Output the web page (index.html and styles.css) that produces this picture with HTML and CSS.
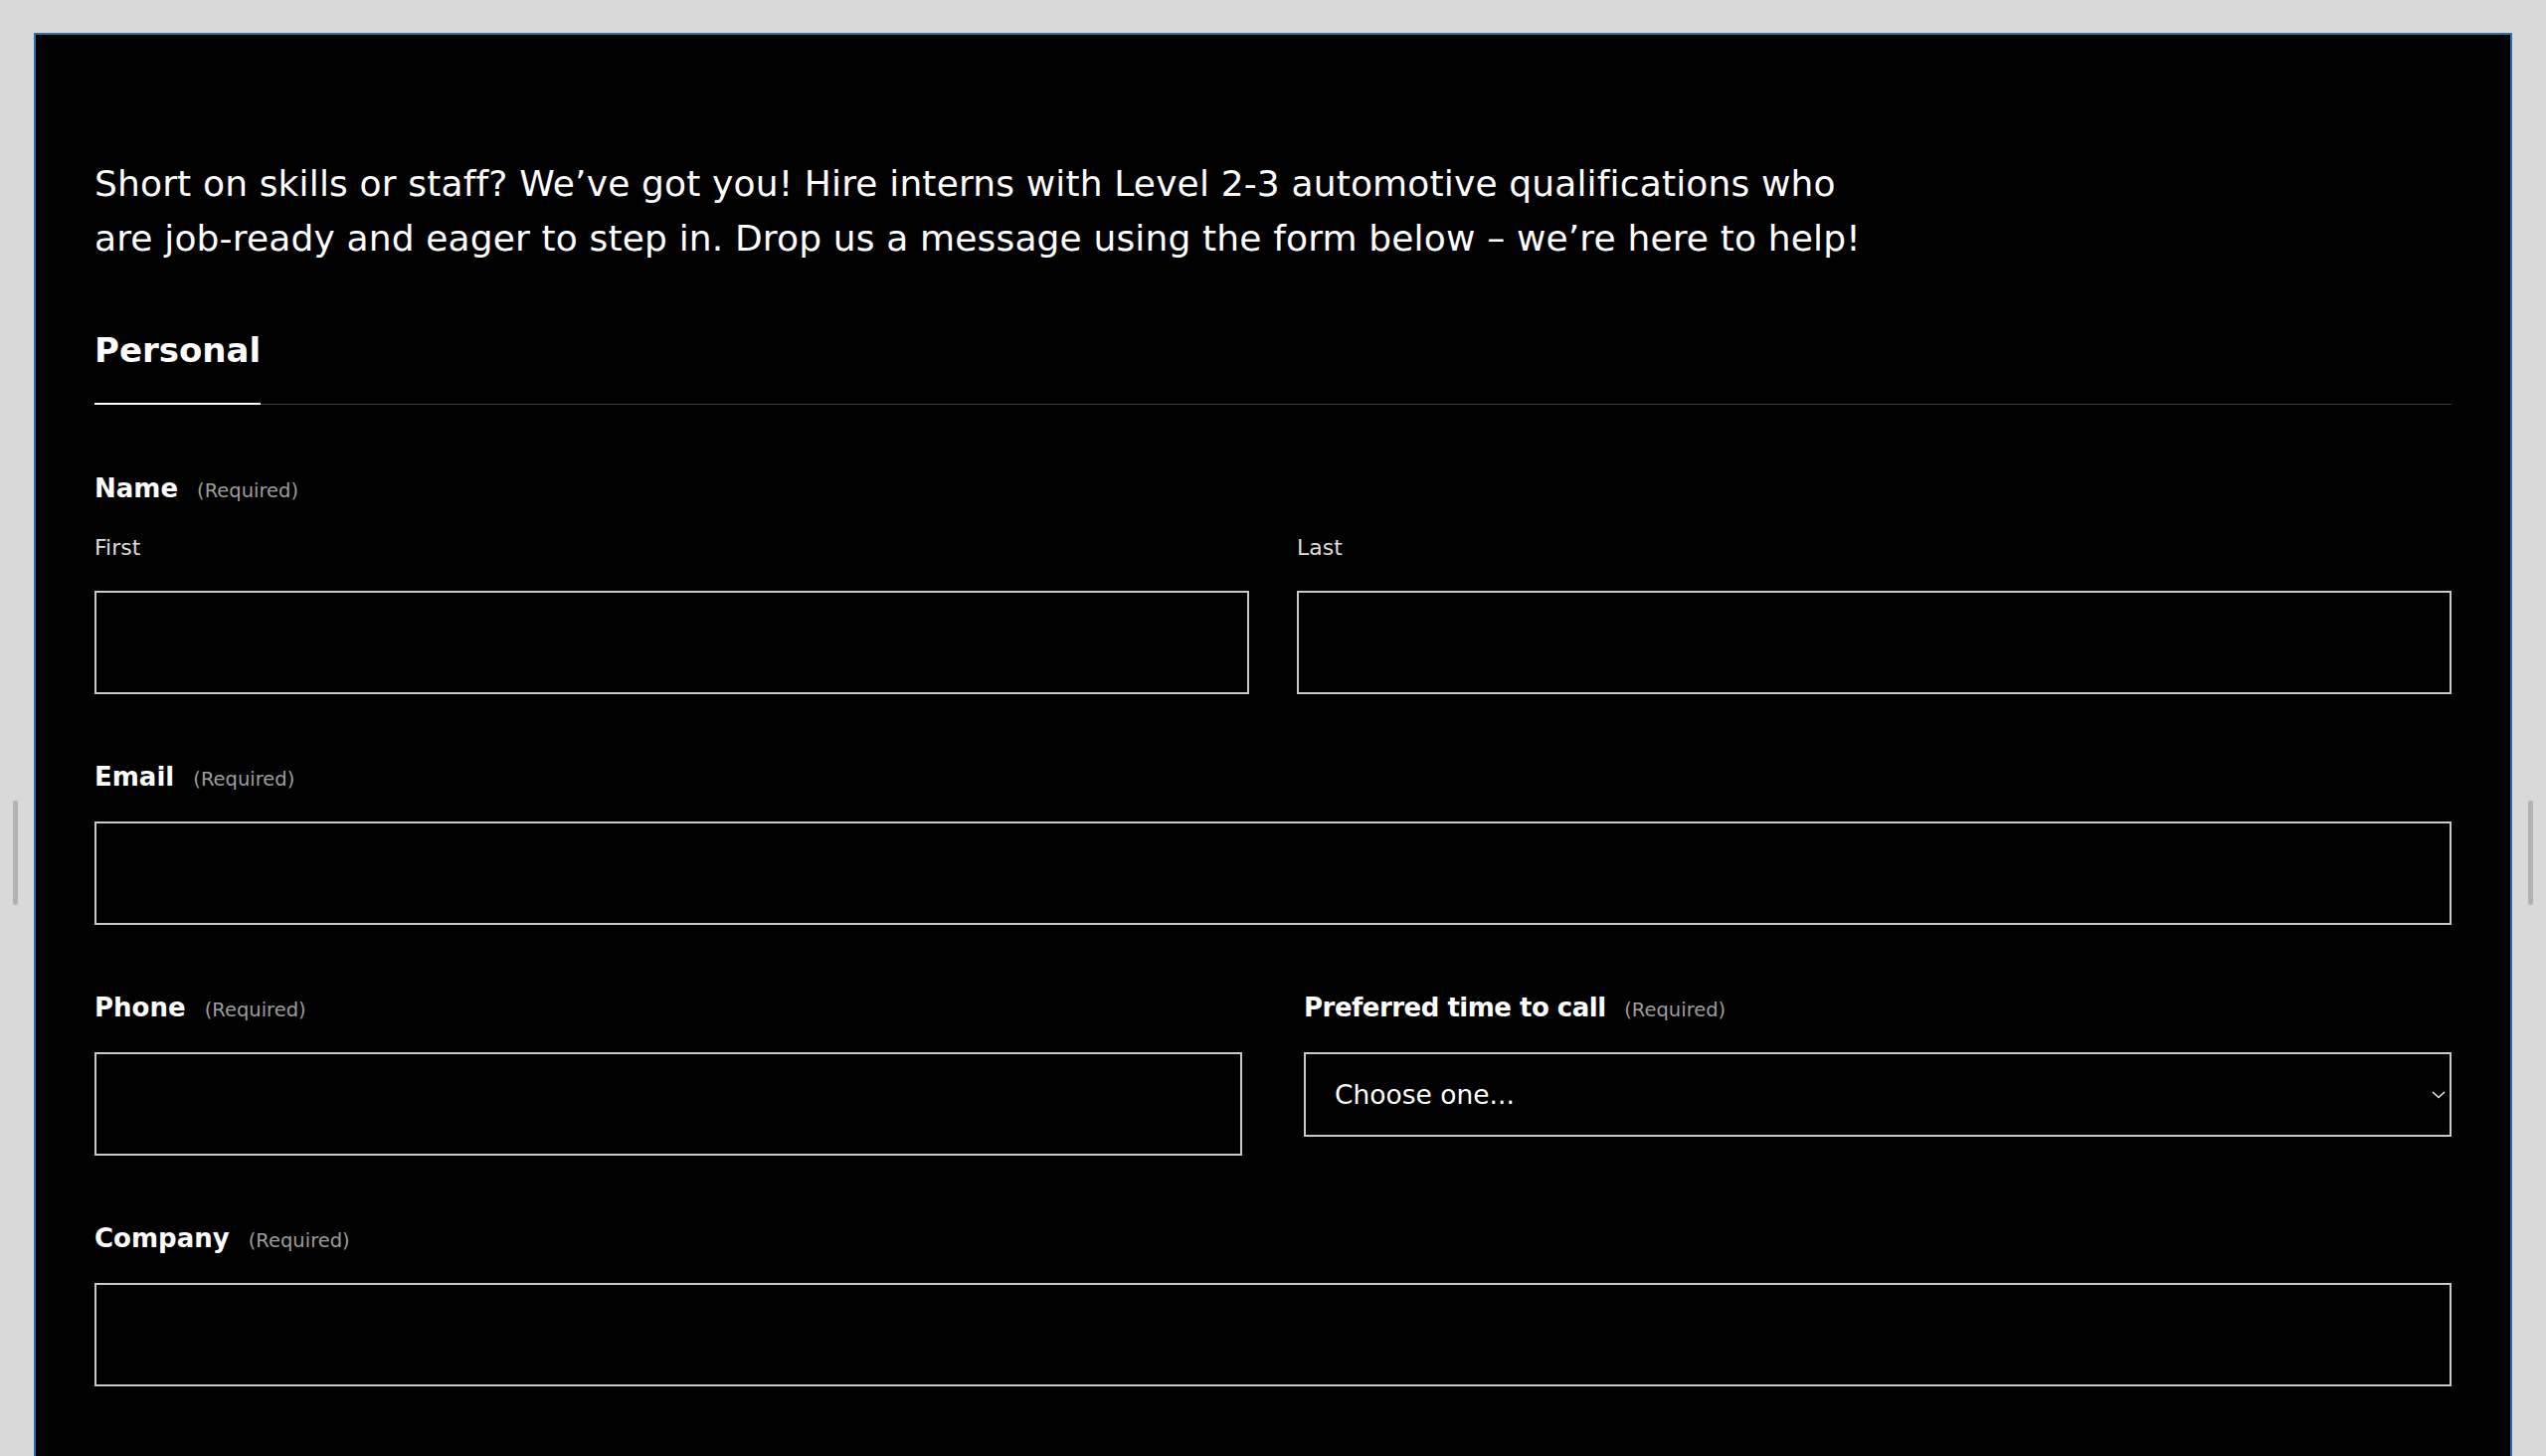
FILE: index.html
```html
<!DOCTYPE html>
<html lang="en">
<head>
    <meta charset="UTF-8">
    <title>Hire interns</title>
    <link rel="stylesheet" href="styles.css">
</head>
<body>
<span class="handle handleLeft"></span>
<span class="handle handleRight"></span>

<div class="frame">
    <p class="intro">Short on skills or staff? We’ve got you! Hire interns with Level 2-3 automotive qualifications who are job-ready and eager to step in. Drop us a message using the form below – we’re here to help!</p>

    <div class="tabs">
        <span class="tab">Personal</span>
    </div>

    <form class="form" action="javascript:;">
        <div class="field">
            <div class="label">Name <span class="req">(Required)</span></div>
            <div class="row rowName">
                <div class="col">
                    <div class="sub">First</div>
                    <input class="text" type="text">
                </div>
                <div class="col">
                    <div class="sub">Last</div>
                    <input class="text" type="text">
                </div>
            </div>
        </div>

        <div class="field">
            <div class="label">Email <span class="req">(Required)</span></div>
            <input class="text" type="email">
        </div>

        <div class="field row rowHalf">
            <div class="col">
                <div class="label">Phone <span class="req">(Required)</span></div>
                <input class="text" type="tel">
            </div>
            <div class="col">
                <div class="label labelTight">Preferred time to call <span class="req">(Required)</span></div>
                <div class="selectBox">
                    <select class="select">
                        <option>Choose one...</option>
                        <option>Morning</option>
                        <option>Afternoon</option>
                    </select>
                    <svg class="chevron" width="14" height="8" viewBox="0 0 14 8">
                        <path d="M1 1l6 5.5L13 1" fill="none" stroke="#e6e6e6" stroke-width="1.6"/>
                    </svg>
                </div>
            </div>
        </div>

        <div class="field">
            <div class="label">Company <span class="req">(Required)</span></div>
            <input class="text" type="text">
        </div>
    </form>
</div>
</body>
</html>
```

FILE: styles.css
```css
html, body, div, p, form, span {
    margin: 0;
    padding: 0;
}

html {
    overflow: hidden;
}

body {
    position: relative;
    background: #d9d9d9;
    font-family: "DejaVu Sans", "Open Sans", sans-serif;
    color: #fff;
}

/* resize handles on the grey edges */
.handle {
    position: absolute;
    top: 805px;
    width: 5px;
    height: 105px;
    background: #b2b2b2;
    border-radius: 3px;
}

.handleLeft {
    left: 13px;
}

.handleRight {
    left: 2542px;
}

.frame {
    margin: 33px 34px 0;
    padding: 122px 59px 140px;
    background: #000;
    border: 2px solid #2f6ea6;
    border-bottom: none;
}

.intro {
    max-width: 1795px;
    font-size: 36px;
    line-height: 55px;
    letter-spacing: 0.15px;
}

.tabs {
    display: flex;
    margin-top: 61px;
    border-bottom: 1px solid #3c3c3c;
}

.tab {
    display: block;
    margin-bottom: -1px;
    padding-bottom: 29px;
    font-size: 34px;
    line-height: 48px;
    font-weight: 700;
    border-bottom: 2px solid #fff;
}

.form {
    margin-top: 66px;
}

.field {
    margin-bottom: 65px;
}

.label {
    margin-bottom: 27px;
    font-size: 26px;
    line-height: 36px;
    font-weight: 700;
}

.labelTight {
    letter-spacing: -0.5px;
}

.req {
    margin-left: 10px;
    font-size: 19.5px;
    line-height: 20px;
    font-weight: 400;
    letter-spacing: 0;
    color: #9d9d9d;
}

.sub {
    margin-bottom: 28px;
    font-size: 22px;
    line-height: 30px;
    color: #dedede;
}

.row {
    display: flex;
}

.rowName {
    gap: 48px;
}

.rowHalf {
    gap: 62px;
}

.col {
    flex: 1;
    min-width: 0;
}

.text {
    display: block;
    box-sizing: border-box;
    width: 100%;
    height: 104px;
    background: #000;
    border: 2px solid #c9c9c9;
    border-radius: 0;
    outline: none;
}

.selectBox {
    position: relative;
}

.select {
    display: block;
    box-sizing: border-box;
    width: 100%;
    height: 85px;
    padding: 0 40px 0 29px;
    font-family: "DejaVu Sans", "Open Sans", sans-serif;
    font-size: 26.5px;
    color: #fff;
    background: #000;
    border: 2px solid #c9c9c9;
    border-radius: 0;
    appearance: none;
    -webkit-appearance: none;
    outline: none;
}

.chevron {
    position: absolute;
    top: 39px;
    right: 6px;
    pointer-events: none;
}
```
